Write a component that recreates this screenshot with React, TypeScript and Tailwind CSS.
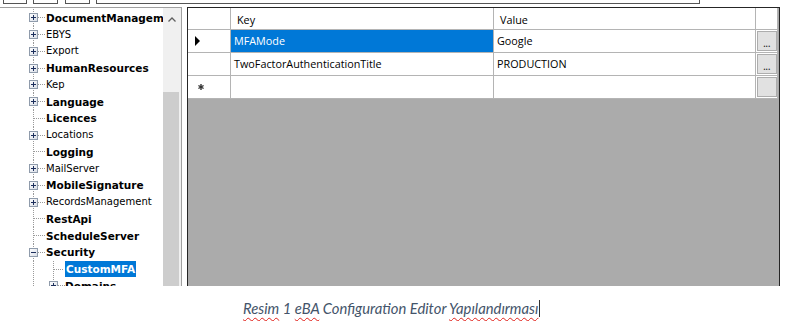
import React from "react";

const LINE = "#9a9a9a";

type Kind = "plus" | "leaf" | "minus" | "child-leaf" | "child-plus";

function Gutter({ kind }: { kind: Kind }) {
  const dots = { stroke: LINE, strokeDasharray: "1 1", strokeWidth: 1 } as const;
  const box = (x: number, minus: boolean) => (
    <>
      <rect x={x + 0.5} y={4.5} width={8} height={8} fill="url(#boxg)" stroke="#8f9bab" />
      <line x1={x + 2} y1={8.5} x2={x + 7} y2={8.5} stroke="#1d2f5c" />
      {!minus && <line x1={x + 4.5} y1={6} x2={x + 4.5} y2={11} stroke="#1d2f5c" />}
    </>
  );
  const level2 = kind === "child-leaf" || kind === "child-plus";
  return (
    <svg width={level2 ? 65 : 46} height={17} className="shrink-0 block">
      <defs>
        <linearGradient id="boxg" x1="0" y1="0" x2="1" y2="1">
          <stop offset="0" stopColor="#ffffff" />
          <stop offset="1" stopColor="#d8dde6" />
        </linearGradient>
      </defs>
      <line x1={33.5} y1={0} x2={33.5} y2={17} {...dots} />
      {kind === "plus" && (
        <>
          <line x1={38} y1={8.5} x2={46} y2={8.5} {...dots} />
          {box(29, false)}
        </>
      )}
      {kind === "minus" && (
        <>
          <line x1={38} y1={8.5} x2={46} y2={8.5} {...dots} />
          {box(29, true)}
        </>
      )}
      {kind === "leaf" && <line x1={34} y1={8.5} x2={46} y2={8.5} {...dots} />}
      {kind === "child-leaf" && (
        <>
          <line x1={53.5} y1={0} x2={53.5} y2={17} {...dots} />
          <line x1={54} y1={8.5} x2={64} y2={8.5} {...dots} />
        </>
      )}
      {kind === "child-plus" && (
        <>
          <line x1={53.5} y1={0} x2={53.5} y2={17} {...dots} />
          <line x1={58} y1={8.5} x2={65} y2={8.5} {...dots} />
          {box(49, false)}
        </>
      )}
    </svg>
  );
}

const treeItems: { label: string; bold?: boolean; kind: Kind; selected?: boolean }[] = [
  { label: "DocumentManagement", bold: true, kind: "plus" },
  { label: "EBYS", kind: "plus" },
  { label: "Export", kind: "plus" },
  { label: "HumanResources", bold: true, kind: "plus" },
  { label: "Kep", kind: "plus" },
  { label: "Language", bold: true, kind: "plus" },
  { label: "Licences", bold: true, kind: "leaf" },
  { label: "Locations", kind: "plus" },
  { label: "Logging", bold: true, kind: "leaf" },
  { label: "MailServer", kind: "plus" },
  { label: "MobileSignature", bold: true, kind: "plus" },
  { label: "RecordsManagement", kind: "plus" },
  { label: "RestApi", bold: true, kind: "leaf" },
  { label: "ScheduleServer", bold: true, kind: "leaf" },
  { label: "Security", bold: true, kind: "minus" },
  { label: "CustomMFA", bold: true, kind: "child-leaf", selected: true },
  { label: "Domains", bold: true, kind: "child-plus" },
];

function Tree() {
  return (
    <div className="w-[182px] h-full shrink-0 flex border-t border-r border-[#a0a0a0] bg-white">
      <div className="w-[163px] h-full overflow-hidden pt-[1.5px] font-['DejaVu_Sans',sans-serif] text-black">
        {treeItems.map((it) => (
          <div key={it.label} className="h-[16.75px] flex items-center whitespace-nowrap">
            <Gutter kind={it.kind} />
            <span
              className={
                (it.bold ? "font-bold text-[10.5px] " : "text-[10px] ") +
                (it.selected ? "bg-[#0078d7] text-white px-[1px] leading-[16px]" : "leading-[16px]")
              }
            >
              {it.label}
            </span>
          </div>
        ))}
      </div>
      <div className="w-[18px] h-full bg-[#f0f0f0] flex flex-col">
        <div className="h-[22px] shrink-0 flex items-center justify-center">
          <svg width={8} height={5} className="block">
            <polyline points="0.5,4.5 4,1 7.5,4.5" fill="none" stroke="#606060" strokeWidth={1.3} />
          </svg>
        </div>
        <div className="h-[62px] shrink-0" />
        <div className="flex-1 w-[16px] bg-[#cdcdcd]" />
      </div>
    </div>
  );
}

function DotsButton({ dots }: { dots: boolean }) {
  return (
    <div className="w-[22px] h-full shrink-0 border-r border-[#b4b4b4] flex items-center justify-center">
      <div className="w-[20px] h-[20px] border border-[#adadad] bg-[#e1e1e1] flex items-end justify-center pb-[2px] text-[11px] leading-none text-[#1a1a1a] tracking-[-0.5px]">
        {dots ? "..." : ""}
      </div>
    </div>
  );
}

function Grid() {
  const rows = [
    { key: "MFAMode", value: "Google", current: true, dots: true },
    { key: "TwoFactorAuthenticationTitle", value: "PRODUCTION", dots: true },
  ];
  return (
    <div className="ml-[5px] w-[593px] h-full shrink-0 border-x border-t border-[#262626] bg-[#ababab] flex flex-col font-['Open_Sans',sans-serif] text-[10.8px] text-black">
      <div className="flex w-[590px] h-[22px] shrink-0 bg-white border-b border-[#b4b4b4]">
        <div className="w-[43px] h-full border-r border-[#b4b4b4]" />
        <div className="w-[263px] h-full border-r border-[#b4b4b4] pl-[6px] pt-[3px] flex items-center">Key</div>
        <div className="w-[262px] h-full border-r border-[#b4b4b4] pl-[6px] pt-[3px] flex items-center">Value</div>
        <div className="w-[22px] h-full border-r border-[#b4b4b4]" />
      </div>
      {rows.map((r) => (
        <div key={r.key} className="flex w-[590px] h-[23px] shrink-0 bg-white border-b border-[#b4b4b4]">
          <div className="w-[43px] h-full border-r border-[#b4b4b4] flex items-center pl-[7px]">
            {r.current && (
              <svg width={6} height={10} className="block">
                <polygon points="0,0 5,5 0,10" fill="#000" />
              </svg>
            )}
          </div>
          <div
            className={
              "w-[263px] h-full border-r border-[#b4b4b4] pl-[3px] pt-[1px] flex items-center " +
              (r.current ? "bg-[#0078d7] text-white" : "")
            }
          >
            {r.key}
          </div>
          <div className="w-[262px] h-full border-r border-[#b4b4b4] pl-[3px] pt-[1px] flex items-center">{r.value}</div>
          <DotsButton dots={r.dots} />
        </div>
      ))}
      <div className="flex w-[590px] h-[23px] shrink-0 bg-white border-b border-[#b4b4b4]">
        <div className="w-[43px] h-full border-r border-[#b4b4b4] flex items-center pl-[10px]">
          <svg width={6} height={6} className="block">
            <line x1={3} y1={0} x2={3} y2={6} stroke="#333" strokeWidth={1.4} />
            <line x1={0.4} y1={1.5} x2={5.6} y2={4.5} stroke="#333" strokeWidth={1.4} />
            <line x1={0.4} y1={4.5} x2={5.6} y2={1.5} stroke="#333" strokeWidth={1.4} />
          </svg>
        </div>
        <div className="w-[263px] h-full border-r border-[#b4b4b4]" />
        <div className="w-[262px] h-full border-r border-[#b4b4b4]" />
        <DotsButton dots={false} />
      </div>
    </div>
  );
}

function Caption() {
  const wavy = "underline decoration-wavy decoration-[#e0211b] decoration-1 underline-offset-[3px]";
  return (
    <div className="flex-1 pl-[243px] pt-[13px] font-['Lato',sans-serif] italic text-[14.8px] text-[#44546a] whitespace-nowrap flex items-start">
      <span className="leading-[19px]">
        <span className={wavy}>Resim</span> 1 <span className={wavy}>eBA</span> Configuration Editor{" "}
        <span className={wavy}>Yapılandırması</span>
      </span>
      <span className="inline-block w-px h-[17px] bg-[#333] ml-[1px] mt-[1px]" />
    </div>
  );
}

export default function App() {
  return (
    <div className="w-[787px] h-[321px] bg-white overflow-hidden flex flex-col">
      <div className="h-[7px] shrink-0 flex items-start pl-[3px]">
        <div className="w-[24px] h-[4px] border-x border-b border-[#555]" />
        <div className="ml-[6px] w-[25px] h-[4px] border-x border-b border-[#555]" />
        <div className="ml-[7px] w-[25px] h-[4px] border-x border-b border-[#555]" />
        <div className="ml-[6px] w-[604px] h-[4px] border-x border-b border-[#555]" />
      </div>
      <div className="h-[279px] shrink-0 flex">
        <Tree />
        <Grid />
      </div>
      <Caption />
    </div>
  );
}
